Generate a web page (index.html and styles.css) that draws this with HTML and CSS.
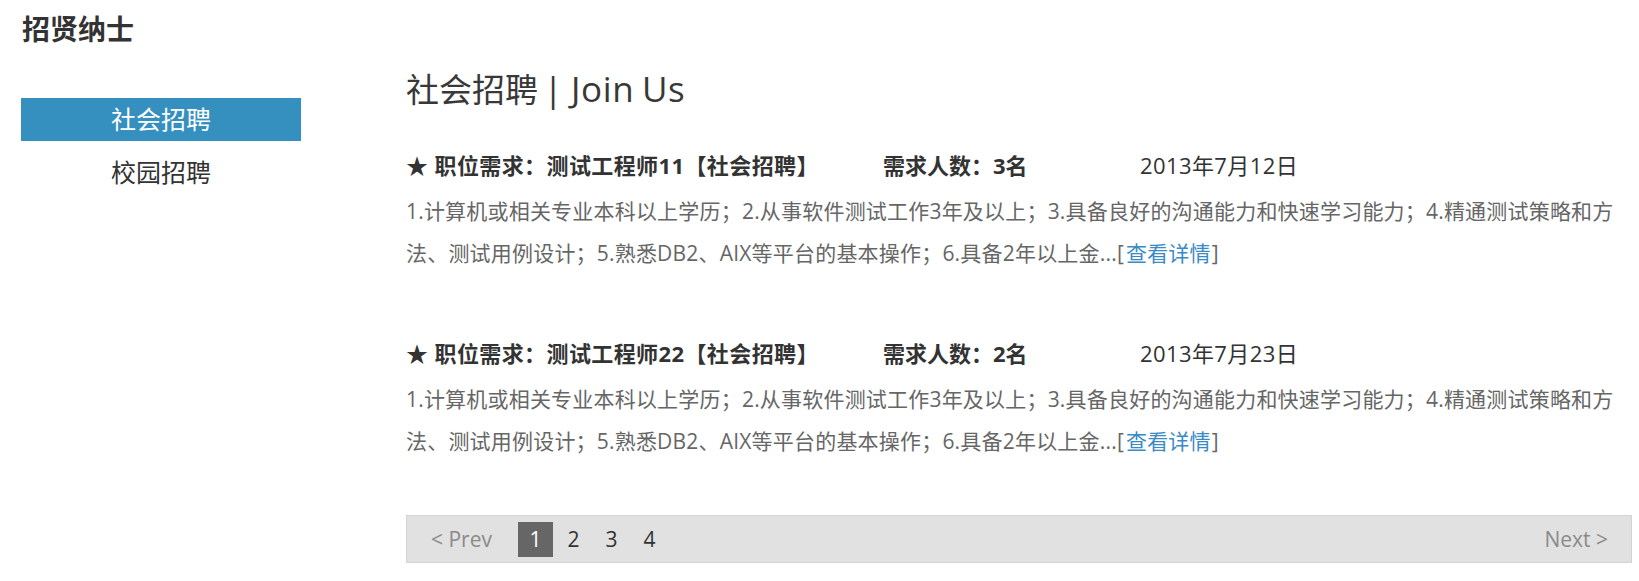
FILE: index.html
```html
<!DOCTYPE html>
<html lang="zh-CN">
<head>
<meta charset="utf-8">
<title>招贤纳士</title>
<link rel="stylesheet" href="styles.css">
</head>
<body>
<div class="page">
  <aside class="side">
    <h2 class="side-title">招贤纳士</h2>
    <ul class="side-nav">
      <li class="side-item active">社会招聘</li>
      <li class="side-item">校园招聘</li>
    </ul>
  </aside>
  <main class="main">
    <h1 class="heading">社会招聘 <span class="heading-en">| Join Us</span></h1>
    <div class="job">
      <div class="job-head">
        <span class="job-title">★ 职位需求：测试工程师11【社会招聘】</span>
        <span class="job-count">需求人数：3名</span>
        <span class="job-date">2013年7月12日</span>
      </div>
      <p class="job-desc">1.计算机或相关专业本科以上学历；2.从事软件测试工作3年及以上；3.具备良好的沟通能力和快速学习能力；4.精通测试策略和方法、测试用例设计；5.熟悉DB2、AIX等平台的基本操作；6.具备2年以上金...[<a class="more" href="#">查看详情</a>]</p>
    </div>
    <div class="job">
      <div class="job-head">
        <span class="job-title">★ 职位需求：测试工程师22【社会招聘】</span>
        <span class="job-count">需求人数：2名</span>
        <span class="job-date">2013年7月23日</span>
      </div>
      <p class="job-desc">1.计算机或相关专业本科以上学历；2.从事软件测试工作3年及以上；3.具备良好的沟通能力和快速学习能力；4.精通测试策略和方法、测试用例设计；5.熟悉DB2、AIX等平台的基本操作；6.具备2年以上金...[<a class="more" href="#">查看详情</a>]</p>
    </div>
    <div class="pager">
      <span class="pager-prev">&lt; Prev</span>
      <span class="pager-pages">
        <span class="pager-num current">1</span>
        <span class="pager-num">2</span>
        <span class="pager-num">3</span>
        <span class="pager-num">4</span>
      </span>
      <span class="pager-next">Next &gt;</span>
    </div>
  </main>
</div>
</body>
</html>
```
FILE: styles.css
```css
* { box-sizing: border-box; }
html, body {
  margin: 0;
  padding: 0;
  background: #fff;
}
body {
  font-family: "Open Sans", "Noto Sans CJK SC", sans-serif;
  color: #333;
}
.page {
  display: flex;
  align-items: flex-start;
  padding-left: 21px;
}
.side {
  width: 280px;
  flex: none;
}
.side-title {
  margin: 9px 0 0 1px;
  font-size: 28px;
  line-height: 40px;
  font-weight: 700;
  color: #333;
}
.side-nav {
  list-style: none;
  margin: 49px 0 0;
  padding: 0;
  display: flex;
  flex-direction: column;
  gap: 10px;
}
.side-item {
  height: 43px;
  line-height: 43px;
  text-align: center;
  font-size: 25px;
  color: #333;
}
.side-item.active {
  background: #3590c0;
  color: #fff;
}
.main {
  margin-left: 105px;
  width: 1226px;
  flex: none;
}
.heading {
  margin: 69px 0 0;
  font-size: 33px;
  line-height: 40px;
  font-weight: 400;
  color: #383838;
  word-spacing: -3px;
}
.heading-en {
  font-size: 35px;
  letter-spacing: 0.6px;
  word-spacing: -2px;
}
.job {
  margin-top: 34px;
}
.job + .job {
  margin-top: 58px;
}
.job-head {
  display: flex;
  height: 42px;
  line-height: 42px;
  font-size: 22px;
  white-space: nowrap;
}
.job-title {
  width: 477px;
  font-weight: 700;
  letter-spacing: 0.4px;
}
.job-count {
  width: 257px;
  font-weight: 700;
}
.job-date {
  font-weight: 400;
  letter-spacing: 0.4px;
}
.job-desc {
  margin: 4px 0 0;
  font-size: 21px;
  line-height: 42px;
  letter-spacing: 0.2px;
  color: #666;
}
.more {
  color: #3a8ac5;
  text-decoration: none;
  margin: 0 1px 0 2px;
}
.pager {
  margin-top: 53px;
  height: 48px;
  border: 1px solid #d3d3d3;
  background: #e1e1e1;
  display: flex;
  align-items: center;
  padding: 0 23px 0 24px;
  font-size: 21px;
}
.pager-prev, .pager-next {
  color: #8a8a8a;
}
.pager-pages {
  display: flex;
  gap: 3px;
  margin-left: 26px;
}
.pager-num {
  width: 35px;
  height: 35px;
  line-height: 35px;
  text-align: center;
  color: #333;
}
.pager-num.current {
  background: #666;
  color: #fff;
}
.pager-next {
  margin-left: auto;
}
```
